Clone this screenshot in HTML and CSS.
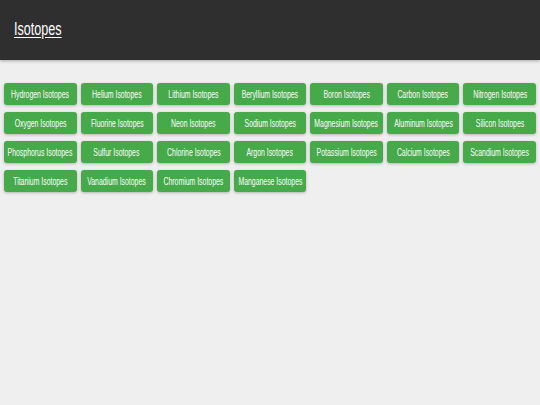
FILE: index.html
```html
<!DOCTYPE html>
<html lang="en">
<head>
<meta charset="utf-8">
<title>Isotopes</title>
<link rel="stylesheet" href="styles.css">
</head>
<body>
<header class="topbar">
  <a class="title" href="#">Isotopes</a>
</header>
<main class="grid">
  <a class="btn" href="#"><span class="label">Hydrogen Isotopes</span></a>
  <a class="btn" href="#"><span class="label">Helium Isotopes</span></a>
  <a class="btn" href="#"><span class="label">Lithium Isotopes</span></a>
  <a class="btn" href="#"><span class="label">Beryllium Isotopes</span></a>
  <a class="btn" href="#"><span class="label">Boron Isotopes</span></a>
  <a class="btn" href="#"><span class="label">Carbon Isotopes</span></a>
  <a class="btn" href="#"><span class="label">Nitrogen Isotopes</span></a>
  <a class="btn" href="#"><span class="label">Oxygen Isotopes</span></a>
  <a class="btn" href="#"><span class="label">Fluorine Isotopes</span></a>
  <a class="btn" href="#"><span class="label">Neon Isotopes</span></a>
  <a class="btn" href="#"><span class="label">Sodium Isotopes</span></a>
  <a class="btn" href="#"><span class="label">Magnesium Isotopes</span></a>
  <a class="btn" href="#"><span class="label">Aluminum Isotopes</span></a>
  <a class="btn" href="#"><span class="label">Silicon Isotopes</span></a>
  <a class="btn" href="#"><span class="label">Phosphorus Isotopes</span></a>
  <a class="btn" href="#"><span class="label">Sulfur Isotopes</span></a>
  <a class="btn" href="#"><span class="label">Chlorine Isotopes</span></a>
  <a class="btn" href="#"><span class="label">Argon Isotopes</span></a>
  <a class="btn" href="#"><span class="label">Potassium Isotopes</span></a>
  <a class="btn" href="#"><span class="label">Calcium Isotopes</span></a>
  <a class="btn" href="#"><span class="label">Scandium Isotopes</span></a>
  <a class="btn" href="#"><span class="label">Titanium Isotopes</span></a>
  <a class="btn" href="#"><span class="label">Vanadium Isotopes</span></a>
  <a class="btn" href="#"><span class="label">Chromium Isotopes</span></a>
  <a class="btn" href="#"><span class="label">Manganese Isotopes</span></a>
</main>
</body>
</html>
```
FILE: styles.css
```css
html, body {
  margin: 0;
  padding: 0;
}
body {
  background: #efefef;
  font-family: "Liberation Sans", Arial, sans-serif;
  min-height: 405px;
}
.topbar {
  height: 60px;
  background: #2f2f2f;
  box-shadow: 0 1px 3px rgba(0,0,0,0.3);
  display: flex;
  align-items: center;
  padding-left: 14px;
}
.title {
  display: inline-block;
  color: #ffffff;
  font-size: 18px;
  text-decoration: underline;
  text-underline-offset: 2px;
  transform: scaleX(0.7);
  transform-origin: left center;
  margin-top: -2px;
}
.grid {
  display: grid;
  grid-template-columns: repeat(7, minmax(0, 1fr));
  column-gap: 4px;
  row-gap: 7px;
  padding: 23px 4px 0 4px;
}
.btn {
  display: flex;
  align-items: center;
  justify-content: center;
  height: 22px;
  min-width: 0;
  background: #46a94a;
  color: #ffffff;
  font-size: 10px;
  text-decoration: none;
  border-radius: 3px;
  box-shadow: 0 1px 3px rgba(0,0,0,0.25);
  white-space: nowrap;
}
.label {
  display: inline-block;
  flex: none;
  transform: scaleX(0.69);
  transform-origin: center center;
}
```
